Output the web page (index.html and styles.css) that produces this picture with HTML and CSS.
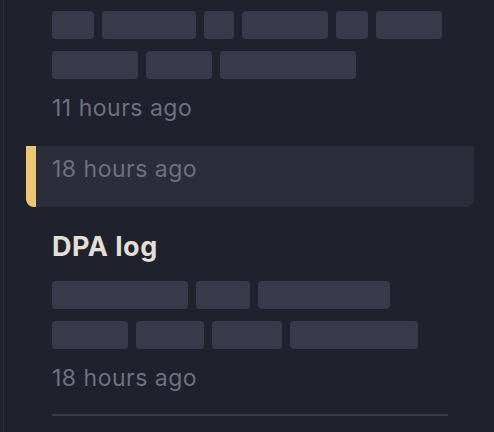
FILE: index.html
```html
<!DOCTYPE html>
<html lang="en">
<head>
    <meta charset="UTF-8">
    <meta name="viewport" content="width=device-width, initial-scale=1.0">
    <title>Activity</title>
    <link rel="stylesheet" href="styles.css">
</head>
<body>
    <div class="feed">
        <!-- partly scrolled entry -->
        <div class="entry entry-top">
            <div class="tags">
                <div class="tag-row">
                    <span class="tag" style="width: 42px"></span>
                    <span class="tag" style="width: 94px"></span>
                    <span class="tag" style="width: 30px"></span>
                    <span class="tag" style="width: 86px"></span>
                    <span class="tag" style="width: 32px"></span>
                    <span class="tag" style="width: 66px"></span>
                </div>
                <div class="tag-row">
                    <span class="tag" style="width: 86px"></span>
                    <span class="tag" style="width: 66px"></span>
                    <span class="tag" style="width: 136px"></span>
                </div>
            </div>
            <div class="time">11 hours ago</div>
        </div>

        <!-- selected entry -->
        <div class="entry entry-active">
            <div class="time">18 hours ago</div>
        </div>

        <div class="entry entry-last">
            <h2 class="entry-title">DPA log</h2>
            <div class="tags">
                <div class="tag-row">
                    <span class="tag" style="width: 136px"></span>
                    <span class="tag" style="width: 54px"></span>
                    <span class="tag" style="width: 132px"></span>
                </div>
                <div class="tag-row">
                    <span class="tag" style="width: 76px"></span>
                    <span class="tag" style="width: 68px"></span>
                    <span class="tag" style="width: 70px"></span>
                    <span class="tag" style="width: 128px"></span>
                </div>
            </div>
            <div class="time">18 hours ago</div>
            <hr class="divider">
        </div>
    </div>
</body>
</html>
```

FILE: styles.css
```css
body {
    font-family: 'Inter', 'Noto Sans', sans-serif;
    background-color: #1f212d;
    margin: 0;
    padding: 0;
    height: 432px;
    overflow: hidden;
}

.feed {
    margin-left: 3px;
    border-left: 1px solid #2f3242;
    min-height: 432px;
}

.entry {
    margin: 0 20px 0 22px;
    padding: 24px 26px 23px;
}

.entry-top {
    padding-top: 11px;
}

.entry-active {
    background-color: #2b2d3b;
    border-left: 10px solid #ebc675;
    border-radius: 0 0 8px 8px;
    padding: 8px 26px 23px 16px;
}

.entry-last {
    padding-bottom: 0;
}

.entry-title {
    margin: 0 0 18px;
    font-size: 27px;
    line-height: 32px;
    font-weight: 700;
    letter-spacing: 0.5px;
    color: #e2dfd7;
}

.tags {
    display: flex;
    flex-direction: column;
    gap: 12px;
    margin-bottom: 14px;
}

.tag-row {
    display: flex;
    gap: 8px;
}

.tag {
    display: block;
    height: 28px;
    border-radius: 4px;
    background-color: #383a4c;
}

.time {
    font-size: 23px;
    line-height: 30px;
    letter-spacing: 0.5px;
    color: #6e7080;
}

.divider {
    margin: 21px 0 0;
    border: none;
    height: 2px;
    background-color: #363b4e;
}
```
